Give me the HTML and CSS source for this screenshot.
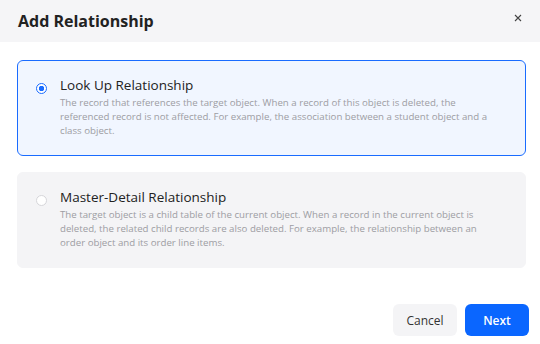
FILE: index.html
```html
<!DOCTYPE html>
<html lang="en">
<head>
  <meta charset="UTF-8">
  <title>Add Relationship</title>
  <link rel="stylesheet" href="styles.css">
</head>
<body>
  <div class="dialog">
    <header class="dialog-header">
      <h2>Add Relationship</h2>
      <button class="close-btn" aria-label="Close">
        <svg width="8" height="8" viewBox="0 0 8 8"><path d="M1 1L7 7M7 1L1 7" stroke="#444" stroke-width="1.1"/></svg>
      </button>
    </header>

    <div class="dialog-body">
      <label class="option selected">
        <span class="radio"></span>
        <div class="option-text">
          <h3>Look Up Relationship</h3>
          <p>The record that references the target object. When a record of this object is deleted, the referenced record is not affected. For example, the association between a student object and a class object.</p>
        </div>
      </label>

      <label class="option">
        <span class="radio"></span>
        <div class="option-text">
          <h3>Master-Detail Relationship</h3>
          <p>The target object is a child table of the current object. When a record in the current object is deleted, the related child records are also deleted. For example, the relationship between an order object and its order line items.</p>
        </div>
      </label>
    </div>

    <footer class="dialog-footer">
      <button class="btn btn-cancel">Cancel</button>
      <button class="btn btn-primary">Next</button>
    </footer>
  </div>
</body>
</html>
```

FILE: styles.css
```css
body {
    margin: 0;
    background: #ffffff;
    font-family: "Open Sans", "Noto Sans", Arial, sans-serif;
    color: #1f1f1f;
}
.dialog {
    width: 540px;
    height: 344px;
    display: flex;
    flex-direction: column;
}
.dialog-header {
    height: 42px;
    background: #f5f5f7;
    display: flex;
    align-items: center;
    justify-content: space-between;
    padding: 0 18px 0 18px;
}
.dialog-header h2 {
    margin: 0;
    font-size: 16px;
    font-weight: 700;
    color: #222;
}
.close-btn {
    background: none;
    border: none;
    padding: 0;
    width: 8px;
    height: 8px;
    display: flex;
    align-items: center;
    justify-content: center;
    margin-bottom: 6px;
}
.dialog-body {
    padding: 18px 14px 0 17px;
    display: flex;
    flex-direction: column;
    gap: 16px;
}
.option {
    display: flex;
    align-items: flex-start;
    gap: 13px;
    padding: 15px 16px 18px 17px;
    border-radius: 6px;
    background: #f4f4f6;
    border: 1px solid #f4f4f6;
    height: 61px;
}
.option.selected {
    background: #f1f6ff;
    border-color: #1a6cff;
}
.radio {
    width: 11px;
    height: 11px;
    border-radius: 50%;
    border: 1px solid #d6d6da;
    background: #fff;
    margin: 7px 0 0 0;
    flex-shrink: 0;
    box-sizing: border-box;
    margin-left: 1px;
}
.option.selected .radio {
    border: 1.5px solid #1a6cff;
    background: radial-gradient(circle, #1a6cff 0 2.5px, #fff 3px);
}
.option-text {
    width: 434px;
}
.option-text h3 {
    margin: 0 0 2px;
    font-size: 13.5px;
    font-weight: 400;
    color: #222;
    line-height: 18px;
}
.option-text p {
    margin: 0;
    font-size: 9.7px;
    line-height: 14px;
    color: #9d9da3;
}
.dialog-footer {
    margin-top: auto;
    display: flex;
    justify-content: flex-end;
    gap: 8px;
    padding: 0 11px 8px 0;
}
.btn {
    height: 32px;
    width: 64px;
    border: none;
    border-radius: 6px;
    font-family: inherit;
    font-size: 12px;
}
.btn-cancel {
    background: #f4f4f6;
    color: #333;
}
.btn-primary {
    background: #0a66ff;
    color: #fff;
    font-weight: 600;
}
```
